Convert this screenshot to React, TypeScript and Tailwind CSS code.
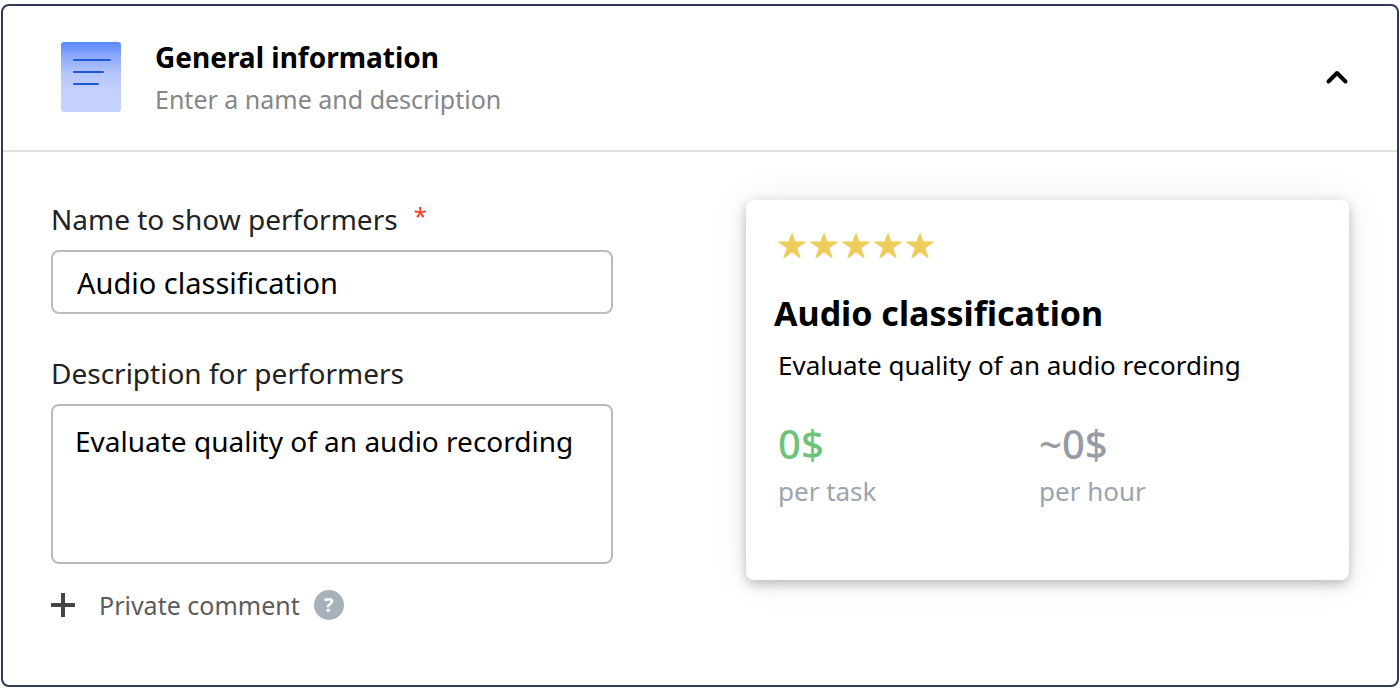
import { useState } from "react";

const stars = [1, 2, 3, 4, 5];

function DocumentIcon() {
  return (
    <svg width="60" height="70" viewBox="0 0 60 70" aria-hidden="true" className="shrink-0">
      <defs>
        <linearGradient id="sheet" x1="0" y1="0" x2="0" y2="1">
          <stop offset="0" stopColor="#5a87fb" />
          <stop offset="0.2" stopColor="#8ba8fb" />
          <stop offset="0.45" stopColor="#b5c6fc" />
          <stop offset="0.7" stopColor="#c4d1fd" />
          <stop offset="1" stopColor="#c6d2fe" />
        </linearGradient>
      </defs>
      <rect width="60" height="70" rx="3" fill="url(#sheet)" />
      <g stroke="#1f57d6" strokeWidth="2" strokeLinecap="round">
        <path d="M13 18H49" />
        <path d="M13 30H42" />
        <path d="M13 42H37" />
      </g>
    </svg>
  );
}

function Star() {
  return (
    <svg width="28" height="27" viewBox="0 0 28 27" aria-hidden="true">
      <path
        fill="#eccd5e"
        d="M14 0 17.3 9.3 28 9.6V10.2L19.4 16.2 22.6 25.6 22 26.2 14 20.6 6 26.2 5.4 25.6 8.6 16.2 0 10.2V9.6L10.7 9.3Z"
      />
    </svg>
  );
}

export default function App() {
  const [open, setOpen] = useState(true);
  const [name, setName] = useState("Audio classification");
  const [description, setDescription] = useState("Evaluate quality of an audio recording");

  return (
    <main className="bg-white px-px pt-1 font-['Noto_Sans',sans-serif] text-black">
      <section className="rounded-lg border-2 border-[#2f3b52]">
        <header className="flex items-center gap-[34px] border-b-2 border-[#e0e0e0] pt-[33px] pr-12 pb-[35px] pl-[58px]">
          <DocumentIcon />
          <div className="flex-1">
            <h1 className="text-[28px] leading-9 font-bold">General information</h1>
            <p className="mt-2 text-[25px] leading-8 text-[#858688]">Enter a name and description</p>
          </div>
          <button
            type="button"
            aria-label="Toggle section"
            aria-expanded={open}
            onClick={() => setOpen(!open)}
          >
            <svg width="24" height="24" viewBox="0 0 24 24" fill="none" stroke="#000" strokeWidth="4" strokeLinecap="round" strokeLinejoin="round" aria-hidden="true">
              <path d="M3.5 16.5 12 8 20.5 16.5" />
            </svg>
          </button>
        </header>

        {open && (
          <div className="grid grid-cols-[562fr_603fr] items-start gap-x-[133px] px-12 pt-12 pb-16">
            <form>
              <label htmlFor="name" className="flex gap-4 text-[28px] leading-[38px] text-[#222]">
                Name to show performers
                <span className="text-2xl leading-8 text-[#f33a2c]">*</span>
              </label>
              <input
                id="name"
                type="text"
                value={name}
                onChange={(e) => setName(e.target.value)}
                className="mt-3 block h-16 w-full rounded-lg border-2 border-[#b8bdc2] bg-white px-6 text-[29px] outline-none"
              />
              <label htmlFor="description" className="mt-10 block text-[28px] leading-[38px] text-[#222]">
                Description for performers
              </label>
              <textarea
                id="description"
                value={description}
                onChange={(e) => setDescription(e.target.value)}
                className="mt-3 block h-40 w-full resize-none rounded-lg border-2 border-[#b8bdc2] bg-white px-[22px] py-4 text-[28px] leading-[38px] outline-none"
              />
              <div className="mt-[25px] flex items-center gap-3.5">
                <button type="button" className="flex items-center gap-6 text-[25px] leading-8 text-[#5c5c5c]">
                  <svg width="24" height="24" viewBox="0 0 24 24" stroke="#444548" strokeWidth="4" aria-hidden="true">
                    <path d="M12 0V24M0 12H24" />
                  </svg>
                  Private comment
                </button>
                <button
                  type="button"
                  aria-label="About private comments"
                  className="flex size-[30px] items-center justify-center rounded-full bg-[#a7b1ba] text-xl leading-none font-bold text-white"
                >
                  ?
                </button>
              </div>
            </form>

            <article className="rounded-lg bg-white px-7 pt-8 pb-[69px] shadow-[0_4px_12px_rgba(0,0,0,0.25),0_0_40px_rgba(0,0,0,0.07)]">
              <div role="img" aria-label="5 out of 5 stars" className="flex gap-1 pl-1">
                {stars.map((n) => (
                  <Star key={n} />
                ))}
              </div>
              <h2 className="mt-[30px] text-[34px] leading-12 font-bold">{name}</h2>
              <p className="mt-2 pl-1 text-[26px] leading-10">{description}</p>
              <dl className="mt-8 grid grid-cols-[261fr_282fr] pl-1">
                <div className="flex flex-col-reverse">
                  <dt className="text-[26px] leading-10 text-[#9aa5af]">per task</dt>
                  <dd className="text-[40px] leading-[54px] font-medium text-[#6cc37a]">0$</dd>
                </div>
                <div className="flex flex-col-reverse">
                  <dt className="text-[26px] leading-10 text-[#9aa5af]">per hour</dt>
                  <dd className="text-[40px] leading-[54px] font-medium text-[#959ca5]">~0$</dd>
                </div>
              </dl>
            </article>
          </div>
        )}
      </section>
    </main>
  );
}
